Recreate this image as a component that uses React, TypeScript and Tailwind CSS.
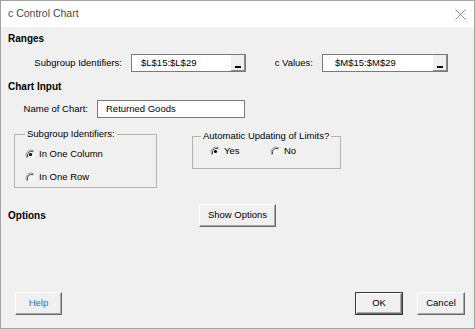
import React from "react";

function DropBtn() {
	return (
		<div className="flex h-full w-[15px] items-end justify-center border-l border-l-white bg-[#f0f0f0] pb-[3px] shadow-[inset_-1px_-1px_0_#8a8a8a]">
			<div className="h-[2px] w-[6px] bg-black" />
		</div>
	);
}

function RangeBox({ value, width, pad }: { value: string; width: string; pad: string }) {
	return (
		<div className={`flex h-[18px] ${width} items-stretch border border-[#7a7a7a] bg-white`}>
			<div className={`flex flex-1 items-center ${pad} text-[9.5px]`}>{value}</div>
			<DropBtn />
		</div>
	);
}

function Radio({ checked, label }: { checked: boolean; label: string }) {
	return (
		<div className="flex items-center gap-[3px]">
			<svg width="11" height="11" viewBox="0 0 11 11">
				<circle cx="5.5" cy="5.5" r="5" fill="#f4f4f4" />
				<path d="M2 9 A5 5 0 0 1 9 2" fill="none" stroke="#9a9a9a" strokeWidth="1" />
				<path d="M2.8 8.2 A4 4 0 0 1 8.2 2.8" fill="none" stroke="#404040" strokeWidth="1" />
				{checked && <circle cx="5.5" cy="5.5" r="1.6" fill="#000" />}
			</svg>
			<span className="text-[9.5px]">{label}</span>
		</div>
	);
}

function Btn({ label, width, blue, def }: { label: string; width: string; blue?: boolean; def?: boolean }) {
	return (
		<div className={`h-[23px] ${width} ${def ? "border border-[#3a3a3a] p-0" : ""}`}>
			<div
				className={`flex h-full w-full items-center justify-center border border-t-white border-l-white border-r-[#6a6a6a] border-b-[#6a6a6a] bg-[#f0f0f0] text-[9.5px] shadow-[inset_-1px_-1px_0_#a8a8a8] ${blue ? "text-[#1b6fd6]" : "text-black"}`}
			>
				{label}
			</div>
		</div>
	);
}

export default function App() {
	return (
		<div
			className="flex h-[329px] w-[475px] flex-col border border-[#a3a3a3] bg-white text-black"
			style={{ fontFamily: '"Liberation Sans", Arial, sans-serif' }}
		>
			{/* title bar */}
			<div className="flex h-[26px] shrink-0 items-center justify-between bg-white pl-[7px] pr-[7px]">
				<span className="text-[10.5px] text-[#4a4a4a]">c Control Chart</span>
				<svg width="11" height="11" viewBox="0 0 11 11" className="mr-[1px]">
					<path d="M0.5 0.5 L10.5 10.5 M10.5 0.5 L0.5 10.5" stroke="#8c8c8c" strokeWidth="1" />
				</svg>
			</div>

			<div className="flex flex-1 flex-col bg-[#f0f0f0] pl-[7px] pr-[9px] pb-[13px]">
				<div className="mt-[6px] h-[12px] text-[10px] font-bold leading-[12px]">Ranges</div>

				<div className="mt-[9px] flex h-[18px] items-center">
					<div className="w-[114px] text-right text-[9.5px]">Subgroup Identifiers:</div>
					<div className="ml-[9px]">
						<RangeBox value="$L$15:$L$29" width="w-[115px]" pad="pl-[9px]" />
					</div>
					<div className="w-[67px] text-right text-[9.5px]">c Values:</div>
					<div className="ml-[9px]">
						<RangeBox value="$M$15:$M$29" width="w-[126px]" pad="pl-[12px]" />
					</div>
				</div>

				<div className="mt-[9px] h-[12px] text-[10px] font-bold leading-[12px]">Chart Input</div>

				<div className="mt-[7px] flex h-[18px] items-center">
					<div className="w-[80px] text-right text-[9.5px]">Name of Chart:</div>
					<div className="ml-[9px] flex h-[18px] w-[148px] items-center border border-[#7a7a7a] bg-white pl-[8px] text-[9.5px]">
						Returned Goods
					</div>
				</div>

				<div className="flex items-start">
					<fieldset className="mt-[10px] ml-[6px] h-[60px] w-[143px] border border-[#b4b4b4] px-0">
						<legend className="ml-[10px] px-[2px] text-[9.5px] leading-[12px]">Subgroup Identifiers:</legend>
						<div className="mt-[7px] ml-[10px] flex flex-col gap-[9px]">
							<Radio checked label="In One Column" />
							<Radio checked={false} label="In One Row" />
						</div>
					</fieldset>
					<fieldset className="mt-[12px] ml-[35px] h-[39px] w-[149px] border border-[#b4b4b4] px-0">
						<legend className="ml-[8px] px-[2px] text-[9.5px] leading-[12px]">Automatic Updating of Limits?</legend>
						<div className="mt-[2px] ml-[17px] flex">
							<div className="w-[60px]">
								<Radio checked label="Yes" />
							</div>
							<Radio checked={false} label="No" />
						</div>
					</fieldset>
				</div>

				<div className="mt-[16px] flex h-[23px] items-center">
					<div className="w-[191px] text-[10px] font-bold">Options</div>
					<Btn label="Show Options" width="w-[77px]" />
				</div>

				<div className="mt-auto flex items-center">
					<div className="ml-[7px]">
						<Btn label="Help" width="w-[47px]" blue />
					</div>
					<div className="ml-auto flex gap-[14px]">
						<Btn label="OK" width="w-[48px]" def />
						<Btn label="Cancel" width="w-[48px]" />
					</div>
				</div>
			</div>
		</div>
	);
}
